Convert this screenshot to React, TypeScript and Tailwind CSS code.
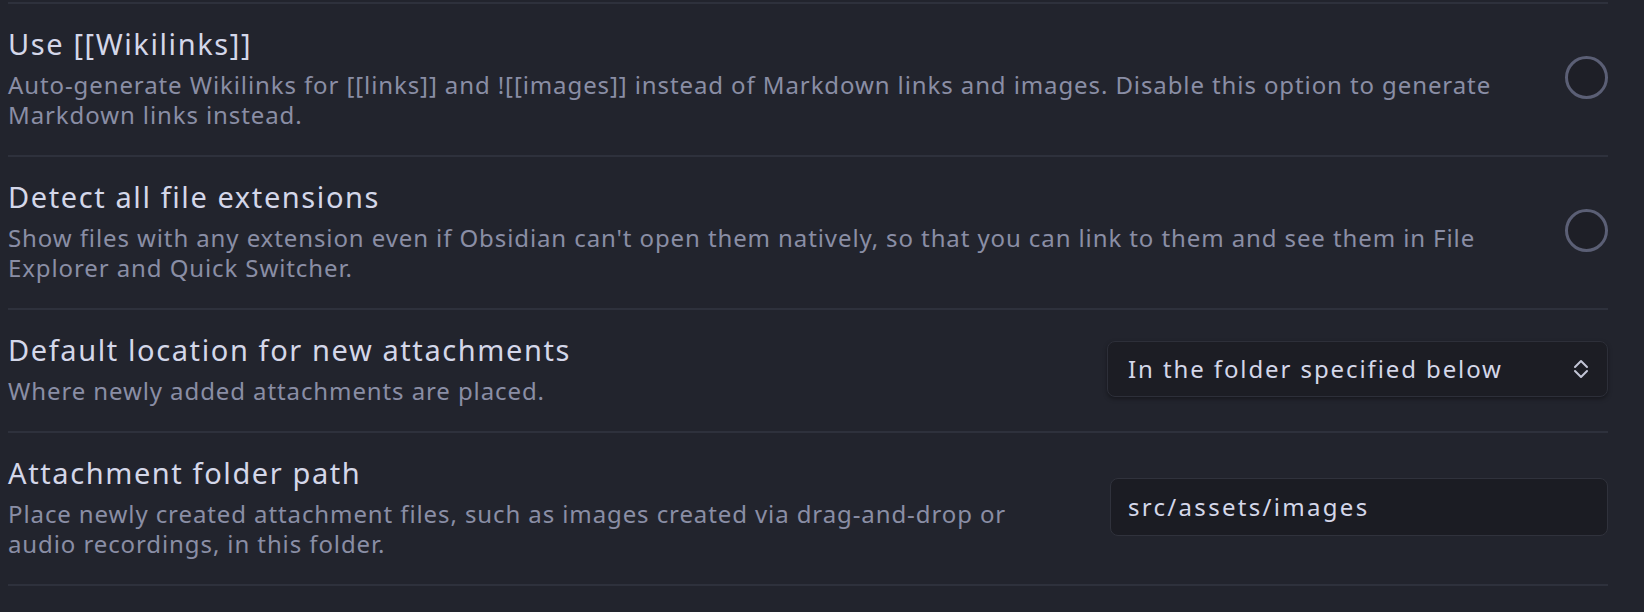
import React from "react";

const FONT = "font-['Noto_Sans',sans-serif]";

function Toggle() {
  return <div className="h-[43px] w-[43px] shrink-0 rounded-full border-[3px] border-[#5b5f75] bg-[#1e1f27]" />;
}

function Dropdown() {
  return (
    <div className="flex h-[56px] w-[501px] shrink-0 items-center justify-between rounded-[8px] border border-[#2d2f39] bg-[#1c1d24] pl-[20px] pr-[18px] shadow-[0_2px_4px_rgba(0,0,0,0.35)]">
      <span className="text-[24px] tracking-[1.9px] text-[#d4d7e9]">In the folder specified below</span>
      <svg width="16" height="20" viewBox="0 0 16 20" fill="none" stroke="#c2c5d6" strokeWidth="2" strokeLinecap="round" strokeLinejoin="round">
        <polyline points="2,8 8,2 14,8" />
        <polyline points="2,12 8,18 14,12" />
      </svg>
    </div>
  );
}

function TextInput() {
  return (
    <div className="flex h-[58px] w-[498px] shrink-0 items-center rounded-[8px] border border-[#30323c] bg-[#1b1c23] pl-[17px]">
      <span className="text-[24px] tracking-[2.3px] text-[#d4d7e9]">src/assets/images</span>
    </div>
  );
}

function Setting({ name, desc, control }: { name: string; desc: string; control: React.ReactNode }) {
  return (
    <div className="flex items-center justify-between gap-[50px] border-t-2 border-[#2e313c] pb-[25px] pt-[21px]">
      <div className="flex-1">
        <div className="text-[29px] leading-[38px] tracking-[1.6px] text-[#d4d7e9]">{name}</div>
        <div className="mt-[7px] text-[24px] leading-[30px] tracking-[0.9px] text-[#8a8ea5]">{desc}</div>
      </div>
      {control}
    </div>
  );
}

export default function App() {
  return (
    <div className={`min-h-screen bg-[#22242d] pl-2 pr-[36px] pt-[2px] ${FONT}`}>
      <Setting
        name="Use [[Wikilinks]]"
        desc="Auto-generate Wikilinks for [[links]] and ![[images]] instead of Markdown links and images. Disable this option to generate Markdown links instead."
        control={<Toggle />}
      />
      <Setting
        name="Detect all file extensions"
        desc="Show files with any extension even if Obsidian can't open them natively, so that you can link to them and see them in File Explorer and Quick Switcher."
        control={<Toggle />}
      />
      <Setting
        name="Default location for new attachments"
        desc="Where newly added attachments are placed."
        control={<Dropdown />}
      />
      <div className="border-b-2 border-[#2e313c]">
        <Setting
          name="Attachment folder path"
          desc="Place newly created attachment files, such as images created via drag-and-drop or audio recordings, in this folder."
          control={<TextInput />}
        />
      </div>
    </div>
  );
}
